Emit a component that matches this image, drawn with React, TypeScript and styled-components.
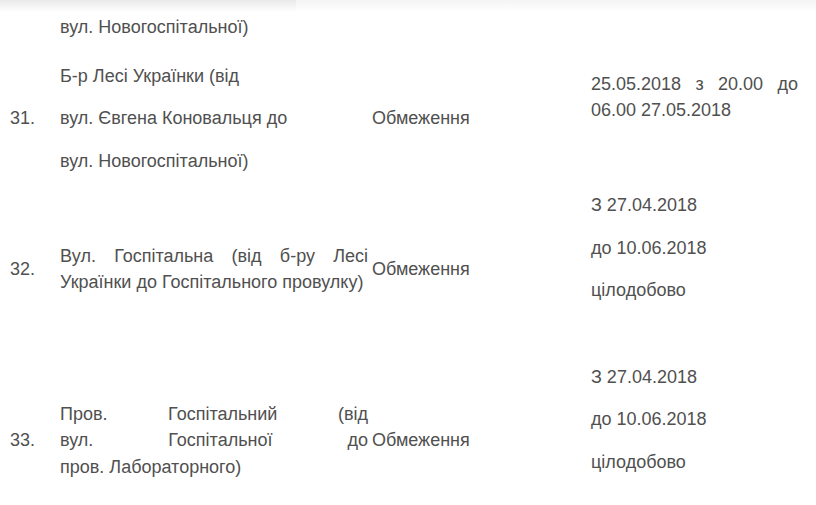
import React from 'react';
import styled, { createGlobalStyle } from 'styled-components';

const GlobalStyle = createGlobalStyle`
  html, body { margin: 0; padding: 0; background: #ffffff; }
  body {
    font-family: "Liberation Sans", Arial, Helvetica, sans-serif;
    font-size: 18px;
    color: #505050;
  }
`;

const Page = styled.div`
  width: 816px;
  height: 505px;
  overflow: hidden;
  background: #ffffff;
`;

const Shade = styled.div`
  display: flex;
  height: 12px;
`;

const ShadePart = styled.div<{ $w?: number; $tone: string }>`
  flex: ${(p) => (p.$w ? `0 0 ${p.$w}px` : '1 1 auto')};
  background: linear-gradient(to bottom, ${(p) => p.$tone}, rgba(255, 255, 255, 0));
`;

const Table = styled.table`
  width: 800px;
  border-collapse: collapse;
  table-layout: fixed;
`;

const Row = styled.tr<{ $h?: number }>`
  height: ${(p) => (p.$h ? `${p.$h}px` : 'auto')};
`;

const Cell = styled.td<{ $num?: boolean; $top?: boolean }>`
  padding: ${(p) => (p.$top ? '2px 2px 0' : '1px 2px')};
  padding-left: ${(p) => (p.$num ? '10px' : '2px')};
  vertical-align: ${(p) => (p.$top ? 'top' : 'middle')};
`;

const Para = styled.p`
  margin: 0 0 16px;
  line-height: 26.4px;
`;

const Line = styled.span<{ $justify?: boolean }>`
  display: block;
  text-align: ${(p) => (p.$justify ? 'justify' : 'left')};
  text-align-last: ${(p) => (p.$justify ? 'justify' : 'left')};
`;

type Cellish = { lines: string[]; justifyAllButLast?: boolean };

const Block: React.FC<Cellish> = ({ lines, justifyAllButLast }) => (
  <Para>
    {lines.map((l, i) => (
      <Line key={i} $justify={justifyAllButLast && i < lines.length - 1}>
        {l}
      </Line>
    ))}
  </Para>
);

const Empty = () => <Para>&nbsp;</Para>;

export default function App() {
  return (
    <Page>
      <GlobalStyle />
      <Shade>
        <ShadePart $w={296} $tone="#e9e9e9" />
        <ShadePart $tone="#f4f4f4" />
      </Shade>
      <Table>
        <colgroup>
          <col style={{ width: 58 }} />
          <col style={{ width: 312 }} />
          <col style={{ width: 219 }} />
          <col style={{ width: 211 }} />
        </colgroup>
        <tbody>
          <Row $h={50}>
            <Cell $num $top />
            <Cell $top>
              <Para>вул. Новогоспітальної)</Para>
            </Cell>
            <Cell $top />
            <Cell $top />
          </Row>
          <Row>
            <Cell $num>
              <Para>31.</Para>
            </Cell>
            <Cell>
              <Para>Б-р Лесі Українки (від</Para>
              <Para>вул. Євгена Коновальця до</Para>
              <Para>вул. Новогоспітальної)</Para>
            </Cell>
            <Cell>
              <Para>Обмеження</Para>
            </Cell>
            <Cell>
              <Block lines={['25.05.2018 з 20.00 до', '06.00 27.05.2018']} justifyAllButLast />
              <Empty />
            </Cell>
          </Row>
          <Row>
            <Cell $num>
              <Para>32.</Para>
            </Cell>
            <Cell>
              <Block
                lines={['Вул. Госпітальна (від б-ру Лесі', 'Українки до Госпітального провулку)']}
                justifyAllButLast
              />
            </Cell>
            <Cell>
              <Para>Обмеження</Para>
            </Cell>
            <Cell>
              <Para>З 27.04.2018</Para>
              <Para>до 10.06.2018</Para>
              <Para>цілодобово</Para>
              <Empty />
            </Cell>
          </Row>
          <Row>
            <Cell $num>
              <Para>33.</Para>
            </Cell>
            <Cell>
              <Block
                lines={['Пров. Госпітальний (від', 'вул. Госпітальної до', 'пров. Лабораторного)']}
                justifyAllButLast
              />
            </Cell>
            <Cell>
              <Para>Обмеження</Para>
            </Cell>
            <Cell>
              <Para>З 27.04.2018</Para>
              <Para>до 10.06.2018</Para>
              <Para>цілодобово</Para>
              <Empty />
            </Cell>
          </Row>
        </tbody>
      </Table>
    </Page>
  );
}
